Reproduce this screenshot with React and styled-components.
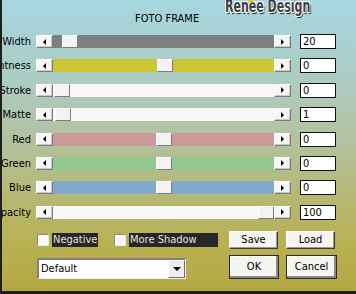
import React from 'react';
import styled, { createGlobalStyle } from 'styled-components';

const GlobalStyle = createGlobalStyle`
  html, body {
    margin: 0;
    padding: 0;
  }
  body {
    font-family: "DejaVu Sans", "Liberation Sans", Arial, sans-serif;
    font-stretch: condensed;
  }
`;

const Dialog = styled.div`
  position: relative;
  width: 356px;
  height: 294px;
  box-sizing: border-box;
  overflow: hidden;
  border-left: 2px solid #1e1e1e;
  border-bottom: 3px solid #1e1e1e;
  background: linear-gradient(
    180deg,
    #a6d6e0 0%,
    #adcbc0 30%,
    #b2c19a 50%,
    #b6b872 68%,
    #b8b050 85%,
    #b4a842 100%
  );
  font-size: 11px;
  color: #000;
`;

const Logo = styled.div`
  position: absolute;
  left: 223px;
  top: -3px;
  font-family: "DejaVu Sans", sans-serif;
  font-stretch: condensed;
  font-weight: 700;
  font-size: 18px;
  line-height: 18px;
  transform: scaleX(0.68);
  transform-origin: left top;
  color: #3a4248;
  text-shadow: 1px 1px 0 #fff, -1px -1px 0 #fff, 1px -1px 0 #fff, -1px 1px 0 #fff,
    2px 2px 1px #222;
  white-space: nowrap;
`;

const LogoBlob = styled.span`
  position: absolute;
  left: 34px;
  top: 2px;
  width: 8px;
  height: 4px;
  border-radius: 50%;
  background: #e8c820;
`;

const TitleBar = styled.div`
  height: 34px;
  box-sizing: border-box;
  padding: 11px 0 0 133px;
  line-height: 15px;
`;

const Rows = styled.div`
  display: grid;
  grid-template-columns: 29px 260px 45px;
  grid-auto-rows: 15px;
  row-gap: 9.4px;
`;

const Row = styled.div`
  display: contents;
`;

const Label = styled.div`
  display: flex;
  justify-content: flex-end;
  overflow: hidden;
  white-space: nowrap;
  line-height: 15px;
`;

const Slider = styled.div`
  display: flex;
  align-self: center;
  height: 13px;
  margin-left: 5px;
`;

const ArrowBtn = styled.div`
  width: 17px;
  height: 13px;
  box-sizing: border-box;
  display: flex;
  align-items: center;
  justify-content: center;
  background: #f6f6f6;
  border-top: 1px solid #fff;
  border-left: 1px solid #fff;
  border-right: 1px solid #7c7c7c;
  border-bottom: 1px solid #7c7c7c;
  box-shadow: inset -1px -1px 0 #c8c8c8;
`;

const Tri = styled.span`
  width: 0;
  height: 0;
  border-top: 3px solid transparent;
  border-bottom: 3px solid transparent;
  ${({ $dir }) =>
    $dir === 'left'
      ? 'border-right: 3px solid #000;'
      : 'border-left: 3px solid #000;'}
`;

const Track = styled.div`
  position: relative;
  flex: 1;
  background: ${({ $color }) => $color};
`;

const Thumb = styled.div`
  position: absolute;
  top: 0;
  left: ${({ $pos }) => $pos}px;
  width: 16px;
  height: 13px;
  box-sizing: border-box;
  background: #f2f2f2;
  border-top: 1px solid #fff;
  border-left: 1px solid #fff;
  border-right: 1px solid #7c7c7c;
  border-bottom: 1px solid #7c7c7c;
  border-radius: 1px;
`;

const ValueBox = styled.div`
  margin-left: 9px;
  width: 36px;
  height: 15px;
  box-sizing: border-box;
  background: #fff;
  border: 1px solid #111;
  padding-left: 2px;
  line-height: 13px;
`;

const Footer = styled.div`
  margin-top: 11px;
  padding-left: 35px;
  display: grid;
  grid-template-columns: 184px 49px 49px;
  grid-template-rows: 18px 24px;
  column-gap: 8px;
  row-gap: 6px;
  align-items: center;
`;

const Checks = styled.div`
  display: flex;
  align-items: center;
`;

const CheckItem = styled.label`
  display: flex;
  align-items: center;
  margin-right: ${({ $gap }) => $gap}px;
`;

const Box = styled.span`
  width: 12px;
  height: 12px;
  box-sizing: border-box;
  background: #fafafa;
  border-top: 1px solid #8a8a8a;
  border-left: 1px solid #8a8a8a;
  border-right: 1px solid #e8e8e8;
  border-bottom: 1px solid #e8e8e8;
  margin-right: 3px;
`;

const CheckText = styled.span`
  width: ${({ $w }) => $w}px;
  height: 14px;
  line-height: 14px;
  background: #272727;
  color: #e4e4e4;
  padding-left: 1px;
  box-sizing: border-box;
`;

const Select = styled.div`
  display: flex;
  width: 149px;
  height: 21px;
  box-sizing: border-box;
  align-self: end;
  background: #fff;
  border-top: 2px solid #808080;
  border-left: 2px solid #808080;
  border-right: 1px solid #f0f0f0;
  border-bottom: 1px solid #f0f0f0;
`;

const SelectText = styled.div`
  flex: 1;
  padding-left: 2px;
  line-height: 17px;
`;

const SelectBtn = styled.div`
  width: 15px;
  display: flex;
  align-items: center;
  justify-content: center;
  background: #ececec;
  border-top: 1px solid #fff;
  border-left: 1px solid #fff;
  border-right: 1px solid #707070;
  border-bottom: 1px solid #707070;
`;

const DownTri = styled.span`
  width: 0;
  height: 0;
  border-left: 4px solid transparent;
  border-right: 4px solid transparent;
  border-top: 4px solid #000;
`;

const Button = styled.div`
  height: ${({ $big }) => ($big ? 24 : 18)}px;
  width: ${({ $w }) => $w}px;
  box-sizing: border-box;
  display: flex;
  align-items: center;
  justify-content: center;
  background: #f4f4f0;
  border-top: 1px solid #fff;
  border-left: 1px solid #fff;
  border-right: 1px solid #3a3a3a;
  border-bottom: 1px solid #3a3a3a;
  box-shadow: inset -1px -1px 0 #9a9a9a;
  ${({ $big }) =>
    $big &&
    `
    outline: 1px solid #2a2a2a;
    outline-offset: -1px;
    box-shadow: inset -2px -2px 0 #8a8a8a, inset 1px 1px 0 #fff;
  `}
`;

const sliders = [
  { label: 'Width', color: '#808080', pos: 9, value: '20' },
  { label: 'Lightness', color: '#ccc634', pos: 104, value: '0' },
  { label: 'Stroke', color: '#f8f8f6', pos: 1, value: '0' },
  { label: 'Matte', color: '#f8f8f6', pos: 2, value: '1' },
  { label: 'Red', color: '#cf9898', pos: 103, value: '0' },
  { label: 'Green', color: '#92c890', pos: 103, value: '0' },
  { label: 'Blue', color: '#80aacb', pos: 103, value: '0' },
  { label: 'Opacity', color: '#f8f8f6', pos: 205, value: '100' },
];

export default function App() {
  return (
    <>
      <GlobalStyle />
      <Dialog>
        <Logo>
          <LogoBlob />
          Renee Design
        </Logo>
        <TitleBar>FOTO FRAME</TitleBar>
        <Rows>
          {sliders.map((s) => (
            <Row key={s.label}>
              <Label>
                <span>{s.label}</span>
              </Label>
              <Slider>
                <ArrowBtn>
                  <Tri $dir="left" />
                </ArrowBtn>
                <Track $color={s.color}>
                  <Thumb $pos={s.pos} />
                </Track>
                <ArrowBtn>
                  <Tri $dir="right" />
                </ArrowBtn>
              </Slider>
              <ValueBox>{s.value}</ValueBox>
            </Row>
          ))}
        </Rows>
        <Footer>
          <Checks>
            <CheckItem $gap={16}>
              <Box />
              <CheckText $w={46}>Negative</CheckText>
            </CheckItem>
            <CheckItem $gap={0}>
              <Box />
              <CheckText $w={89}>More Shadow</CheckText>
            </CheckItem>
          </Checks>
          <Button $w={49}>Save</Button>
          <Button $w={49}>Load</Button>
          <Select>
            <SelectText>Default</SelectText>
            <SelectBtn>
              <DownTri />
            </SelectBtn>
          </Select>
          <Button $w={50} $big>
            OK
          </Button>
          <Button $w={51} $big>
            Cancel
          </Button>
        </Footer>
      </Dialog>
    </>
  );
}
